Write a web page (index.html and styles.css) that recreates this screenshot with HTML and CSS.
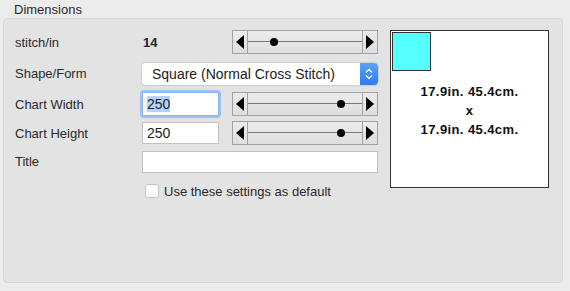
FILE: index.html
```
<!DOCTYPE html>
<html lang="en">
<head>
  <meta charset="UTF-8">
  <title>Dimensions</title>
  <link rel="stylesheet" href="styles.css">
</head>
<body>
  <div class="legend">Dimensions</div>
  <div class="group">
    <div class="form">
      <label class="lbl">stitch/in</label>
      <div class="value">14</div>
      <div class="slider">
        <span class="arrow left"></span>
        <div class="track"><span class="thumb" style="left: 23%"></span></div>
        <span class="arrow right"></span>
      </div>

      <label class="lbl">Shape/Form</label>
      <div class="popup wide">
        <span class="popup-text">Square (Normal Cross Stitch)</span>
        <span class="popup-btn">
          <svg width="10" height="14" viewBox="0 0 10 14"><path d="M2 5.5 L5 2.5 L8 5.5 M2 8.5 L5 11.5 L8 8.5" fill="none" stroke="#fff" stroke-width="1.4"/></svg>
        </span>
      </div>

      <label class="lbl">Chart Width</label>
      <div class="field focus"><span class="sel">250</span></div>
      <div class="slider">
        <span class="arrow left"></span>
        <div class="track"><span class="thumb" style="left: 82%"></span></div>
        <span class="arrow right"></span>
      </div>

      <label class="lbl">Chart Height</label>
      <div class="field">250</div>
      <div class="slider">
        <span class="arrow left"></span>
        <div class="track"><span class="thumb" style="left: 82%"></span></div>
        <span class="arrow right"></span>
      </div>

      <label class="lbl">Title</label>
      <div class="field wide"></div>

      <div class="check">
        <span class="box"></span>
        <span>Use these settings as default</span>
      </div>
    </div>

    <div class="preview">
      <div class="swatch"></div>
      <div class="size">
        <div>17.9in. 45.4cm.</div>
        <div>x</div>
        <div>17.9in. 45.4cm.</div>
      </div>
    </div>
  </div>
</body>
</html>
```
FILE: styles.css
```
* {
  margin: 0;
  padding: 0;
  box-sizing: border-box;
}

body {
  background: #ececec;
  font-family: "Liberation Sans", Arial, sans-serif;
  font-size: 13px;
  color: #222;
  width: 570px;
  height: 291px;
  overflow: hidden;
}

.legend {
  height: 18px;
  padding: 2px 0 0 14px;
  color: #2a2a2a;
}

/* Group box */
.group {
  margin-left: 3px;
  width: 560px;
  height: 265px;
  background: #e3e3e3;
  border: 1px solid #d8d8d8;
  border-radius: 4px;
  padding: 7px 0 0 11px;
  display: flex;
  align-items: flex-start;
  gap: 12px;
}

.form {
  display: grid;
  grid-template-columns: 114px 77px 146px;
  grid-template-rows: 32px 31px 30px 28px 29px 30px;
  column-gap: 13px;
  align-items: center;
}

.lbl {
  color: #2a2a2a;
}

.value {
  font-weight: bold;
  padding-left: 1px;
}

.wide {
  grid-column: 2 / 4;
}

/* Slider */
.slider {
  height: 24px;
  display: flex;
  border: 1px solid #a2a2a2;
  background: linear-gradient(#ececec, #dedede);
}

.arrow {
  width: 15px;
  display: flex;
  align-items: center;
  justify-content: center;
}

.arrow.left {
  border-right: 1px solid #a2a2a2;
}

.arrow.right {
  border-left: 1px solid #a2a2a2;
}

.arrow.left::before {
  content: '';
  border-top: 7px solid transparent;
  border-bottom: 7px solid transparent;
  border-right: 8px solid #000;
}

.arrow.right::before {
  content: '';
  border-top: 7px solid transparent;
  border-bottom: 7px solid transparent;
  border-left: 8px solid #000;
}

.track {
  flex: 1;
  position: relative;
}

.track::before {
  content: '';
  position: absolute;
  left: 0;
  right: 0;
  top: 10px;
  border-top: 1px solid #777;
}

.thumb {
  position: absolute;
  top: 7px;
  width: 8px;
  height: 8px;
  margin-left: -4px;
  border-radius: 50%;
  background: #000;
}

/* Popup */
.popup {
  height: 22px;
  background: #fff;
  border-radius: 4px;
  box-shadow: 0 0 0 1px #cfcfcf, 0 1px 1px rgba(0,0,0,0.15);
  display: flex;
  align-items: center;
  overflow: hidden;
}

.popup-text {
  flex: 1;
  padding-left: 10px;
  font-size: 14px;
  color: #222;
}

.popup-btn {
  width: 18px;
  height: 100%;
  background: linear-gradient(#5aa1fb, #2c7cf2);
  display: flex;
  align-items: center;
  justify-content: center;
}

/* Text fields */
.field {
  height: 22px;
  background: #fff;
  border: 1px solid #c3c3c3;
  padding: 2px 0 0 4px;
  font-size: 14px;
  color: #222;
}

.field.focus {
  height: 24px;
  border: 1px solid #8ab4ec;
  box-shadow: 0 0 0 2px #9cc2f3;
  border-radius: 2px;
  padding-top: 3px;
}

.sel {
  background: #b3d3fd;
}

/* Checkbox */
.check {
  grid-column: 2 / 4;
  display: flex;
  align-items: center;
  gap: 5px;
  padding-left: 3px;
  color: #2a2a2a;
}

.box {
  width: 14px;
  height: 14px;
  background: #fff;
  border: 1px solid #c4c4c4;
  border-radius: 3px;
}

/* Preview */
.preview {
  margin-top: 4px;
  width: 159px;
  height: 158px;
  background: #fff;
  border: 1px solid #333;
  padding: 1px;
}

.swatch {
  width: 39px;
  height: 39px;
  background: #55ffff;
  border: 1px solid #333;
}

.size {
  margin-top: 11px;
  text-align: center;
  font-weight: bold;
  font-size: 13px;
  letter-spacing: 0.4px;
  line-height: 19px;
  color: #111;
}
```
